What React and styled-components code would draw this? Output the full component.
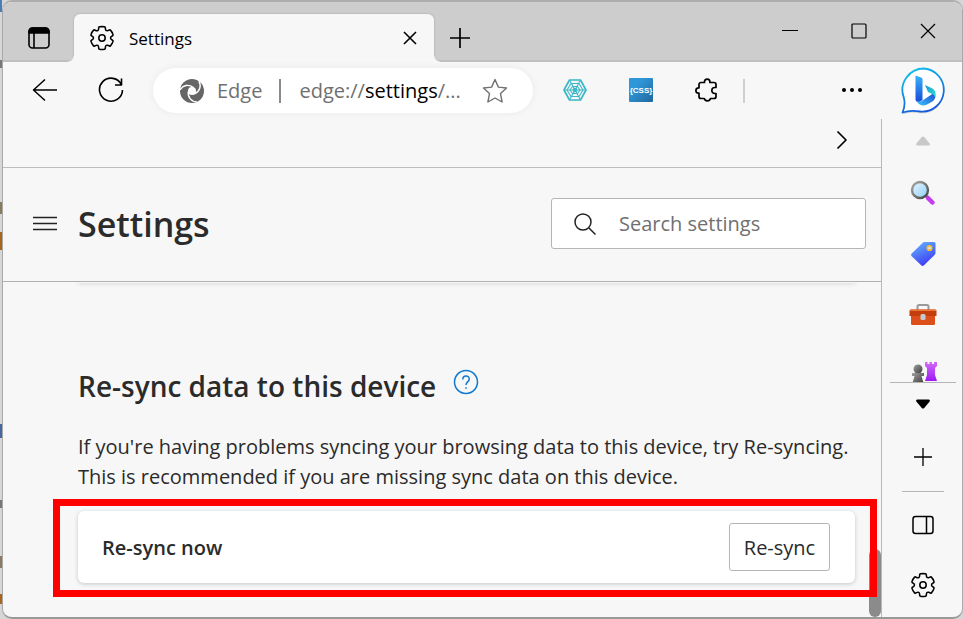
import React, { useState } from 'react'
import styled, { createGlobalStyle } from 'styled-components'

const gearOutline =
    'M12 2.25C12.75 2.26 13.48 2.34 14.19 2.5C14.51 2.57 14.74 2.83 14.78 3.15L14.95 4.68C15.02 5.38 15.62 5.91 16.32 5.91C16.51 5.91 16.7 5.87 16.87 5.79L18.27 5.18C18.57 5.05 18.91 5.12 19.12 5.35C20.14 6.43 20.89 7.73 21.33 9.15C21.42 9.45 21.31 9.78 21.06 9.97L19.81 10.89C19.46 11.15 19.25 11.56 19.25 12C19.25 12.44 19.46 12.85 19.82 13.11L21.06 14.03C21.32 14.22 21.42 14.55 21.33 14.85C20.89 16.27 20.14 17.56 19.13 18.65C18.91 18.88 18.57 18.95 18.28 18.82L16.87 18.2C16.47 18.03 16.01 18.05 15.63 18.27C15.25 18.49 14.99 18.88 14.95 19.32L14.78 20.84C14.74 21.16 14.51 21.42 14.2 21.49C12.76 21.84 11.25 21.84 9.8 21.49C9.49 21.42 9.26 21.16 9.23 20.84L9.06 19.32C9.01 18.88 8.75 18.5 8.37 18.28C7.99 18.06 7.53 18.03 7.13 18.21L5.73 18.83C5.43 18.95 5.09 18.88 4.88 18.65C3.86 17.57 3.11 16.27 2.67 14.85C2.58 14.55 2.69 14.22 2.94 14.03L4.19 13.11C4.54 12.85 4.75 12.44 4.75 12C4.75 11.56 4.54 11.15 4.19 10.89L2.95 9.97C2.69 9.78 2.58 9.45 2.67 9.15C3.11 7.73 3.87 6.44 4.88 5.35C5.1 5.12 5.44 5.05 5.73 5.18L7.13 5.8C7.53 5.97 7.99 5.95 8.38 5.72C8.76 5.5 9.01 5.11 9.06 4.68L9.23 3.15C9.26 2.83 9.5 2.57 9.81 2.5C10.53 2.34 11.26 2.26 12 2.25Z'

const GearIcon = () => (
    <Icon $size={26} viewBox="1 1 22 22" $weight={1.3}>
        <path d={gearOutline} />
        <circle cx="12" cy="12" r="2.7" />
    </Icon>
)

const WorkspaceIcon = () => (
    <Icon $size={24} $weight={1.6}>
        <rect x="2" y="2" width="20" height="20" rx="3.5" />
        <path d="M2 7V5.5A3.5 3.5 0 0 1 5.5 2h13A3.5 3.5 0 0 1 22 5.500V7z" fill="#000" />
        <path d="M7 7v15" />
    </Icon>
)

const SwirlIcon = () => (
    <Icon $size={24} $weight={0}>
        <circle cx="12" cy="12" r="12" fill="#666" />
        <g fill="none" stroke="#fff" strokeWidth="1.400">
            <path d="M13.500 8.500C8.500 5 3 6 0 11" />
            <path d="M13.500 8.500C8.500 5 3 6 0 11" transform="rotate(120 12 12)" />
            <path d="M13.500 8.500C8.500 5 3 6 0 11" transform="rotate(240 12 12)" />
        </g>
        <circle cx="12" cy="12" r="4" fill="#fff" />
    </Icon>
)

const WebIcon = () => (
    <Icon $size={24} $color="#3bb8c8" $weight={1.1}>
        <path d="M6.500 2h11L23 12l-5.500 10h-11L1 12z" strokeWidth="1.700" />
        <path d="M8 5.500h8l4 6.500-4 6.500H8L4 12zM9.500 8.500h5L17 12l-2.500 3.500h-5L7 12z" />
        <path d="M6.500 2l11 20M17.500 2l-11 20M1 12h22" />
        <circle cx="12" cy="12" r="1.800" fill="#3bb8c8" />
    </Icon>
)

const CssIcon = () => (
    <Icon $size={24} $weight={0}>
        <defs>
            <linearGradient id="css" x1="0" y1="0" x2="1" y2="1">
                <stop offset="0.300" stopColor="#2f97d8" />
                <stop offset="1" stopColor="#20679b" />
            </linearGradient>
        </defs>
        <rect width="24" height="24" rx="1" fill="url(#css)" />
        <text x="12" y="15" textAnchor="middle" fill="#fff" fontFamily="Liberation Sans, sans-serif" fontWeight="700" fontSize="8">{'{CSS}'}</text>
    </Icon>
)

const PuzzleIcon = () => (
    <Icon $size={24} $weight={1.7}>
        <path d="M6 4.500h3.500v-.7a2.700 2.700 0 0 1 5.400 0v.7H19a2 2 0 0 1 2 2v3h-1.200a3 3 0 0 0 0 6H21v3a2 2 0 0 1-2 2h-3.500a3.200 3.200 0 0 1-6.200 0H6a2 2 0 0 1-2-2v-3.300h-.4a2.700 2.700 0 0 1 0-5.400H4V6.500a2 2 0 0 1 2-2z" />
    </Icon>
)

const BingIcon = () => (
    <Icon $size={50} viewBox="0 0 50 50" $weight={0}>
        <defs>
            <linearGradient id="ring" x1="0.200" y1="0" x2="0.600" y2="1">
                <stop offset="0" stopColor="#12c0ec" />
                <stop offset="1" stopColor="#1455d8" />
            </linearGradient>
            <linearGradient id="stem" x1="0" y1="0" x2="0" y2="1">
                <stop offset="0" stopColor="#35b4fb" />
                <stop offset="1" stopColor="#1848d8" />
            </linearGradient>
            <linearGradient id="bowl" x1="0" y1="1" x2="1" y2="0">
                <stop offset="0" stopColor="#39c5fa" />
                <stop offset="1" stopColor="#1b48d4" />
            </linearGradient>
            <linearGradient id="leaf" x1="0" y1="0" x2="1" y2="1">
                <stop offset="0" stopColor="#169be0" />
                <stop offset="1" stopColor="#32dfc9" />
            </linearGradient>
        </defs>
        <path d="M25 3.500a21.500 21.500 0 1 1-3.500 43C15 45.500 9 45.500 3.500 47.500 6 42 6 37 4.800 32.500A21.500 21.500 0 0 1 25 3.500z" transform="translate(0 2)" fill="#000" opacity="0.120" />
        <path d="M25 3.500a21.500 21.500 0 1 1-3.500 43C15 45.500 9 45.500 3.500 47.500 6 42 6 37 4.800 32.500A21.500 21.500 0 0 1 25 3.500z" fill="#fff" stroke="url(#ring)" strokeWidth="1.800" />
        <path d="M16.500 10.500l5.500 2c1 .4 1.500 1 1.500 2.200V35l-4 2.500c-2-.5-3-1.800-3-3.500z" fill="url(#stem)" />
        <path d="M18 36l4 .5 13.500-9c2 4 .5 7.500-2.500 9.300l-5 2.800c-4 2-9 .4-10-3.600z" fill="url(#bowl)" />
        <path d="M26 20l7 3.300c3 1.500 4.500 5 3 9-.6-2-1.800-2.700-3.500-3.500L29 27z" fill="url(#leaf)" />
    </Icon>
)

const LensIcon = () => (
    <Icon $size={26} viewBox="0 0 26 26" $weight={0}>
        <defs>
            <linearGradient id="glass" x1="0" y1="0" x2="1" y2="1">
                <stop offset="0" stopColor="#e6f6ff" />
                <stop offset="1" stopColor="#8fd0f8" />
            </linearGradient>
            <linearGradient id="rim" x1="0" y1="0" x2="1" y2="1">
                <stop offset="0" stopColor="#aaa" />
                <stop offset="1" stopColor="#444" />
            </linearGradient>
        </defs>
        <path d="M15 15l3 3" stroke="#555" strokeWidth="3" />
        <path d="M18 18l4.500 4.500" stroke="#c63df0" strokeWidth="4.500" strokeLinecap="round" />
        <circle cx="10" cy="10" r="8" fill="url(#glass)" stroke="url(#rim)" strokeWidth="2.400" />
    </Icon>
)

const TagIcon = () => (
    <Icon $size={26} viewBox="0 0 26 26" $weight={0}>
        <defs>
            <linearGradient id="tag" x1="0.200" y1="0" x2="0.700" y2="1">
                <stop offset="0" stopColor="#62b3fa" />
                <stop offset="1" stopColor="#3c35f5" />
            </linearGradient>
        </defs>
        <path d="M14.500 1H24a1.500 1.500 0 0 1 1.500 1.500V12a3 3 0 0 1-1 2L14 24.300a2 2 0 0 1-2.800 0L1.700 15.200a2 2 0 0 1 0-2.800L12.500 2a3 3 0 0 1 2-1z" fill="url(#tag)" />
        <circle cx="19.500" cy="7" r="2.300" fill="#d5dce8" stroke="#f8bd1a" strokeWidth="1.600" />
    </Icon>
)

const ToolboxIcon = () => (
    <Icon $size={28} viewBox="0 0 28 28" $weight={0}>
        <path d="M8.500 9V5.500A1.500 1.500 0 0 1 10 4h8a1.500 1.500 0 0 1 1.500 1.500V9" fill="none" stroke="#999" strokeWidth="2" />
        <path d="M2 13h24v9.500a1.500 1.500 0 0 1-1.500 1.500h-21A1.500 1.500 0 0 1 2 22.500z" fill="#dc4f1b" />
        <path d="M2 8.500h24a1.500 1.500 0 0 1 1.500 1.500V15h-27v-5A1.500 1.500 0 0 1 2 8.500z" fill="#c43d0c" />
        <path d="M2 8.500h24a1.500 1.500 0 0 1 1.400 1.500H.6A1.500 1.500 0 0 1 2 8.500z" fill="#ed7639" />
        <rect x="11.500" y="13" width="5" height="6" rx="1.500" fill="#c3cbd1" />
    </Icon>
)

const ChessIcon = () => (
    <Icon $size={28} viewBox="0 5 28 28" $weight={0}>
        <defs>
            <linearGradient id="rook" x1="0" y1="0" x2="0" y2="1">
                <stop offset="0" stopColor="#d16cf5" />
                <stop offset="1" stopColor="#9d19f5" />
            </linearGradient>
            <linearGradient id="pawn" x1="0" y1="0" x2="1" y2="1">
                <stop offset="0" stopColor="#a0a0a0" />
                <stop offset="1" stopColor="#3d3d3d" />
            </linearGradient>
        </defs>
        <path d="M16 5h2.500v2h2V5h2.500v2h2V5H28v4l-2 2v7l2 6H16l2-6v-7l-2-2z" fill="url(#rook)" />
        <circle cx="9" cy="12" r="4.500" fill="url(#pawn)" />
        <path d="M3 16h12v3h-2.500l2 7h-11l2-7H3z" fill="url(#pawn)" />
    </Icon>
)

const extensions = [
    { name: 'Web inspector', icon: <WebIcon /> },
    { name: 'CSS viewer', icon: <CssIcon /> },
    { name: 'Extensions', icon: <PuzzleIcon /> },
]

const sidebarApps = [
    { name: 'Search', icon: <LensIcon /> },
    { name: 'Shopping', icon: <TagIcon /> },
    { name: 'Tools', icon: <ToolboxIcon /> },
    { name: 'Games', icon: <ChessIcon /> },
]

const App = () => {
    const [search, setSearch] = useState('')

    return (
        <>
            <GlobalStyle />
            <Desktop>
                <Window>
                    <TitleBar>
                        <IconButton $width={71} aria-label="Workspaces"><WorkspaceIcon /></IconButton>
                        <Tab>
                            <GearIcon />
                            <span>Settings</span>
                            <TabClose aria-label="Close tab">
                                <Icon $size={14} viewBox="0 0 14 14" $weight={1.6}><path d="M1 1l12 12M13 1L1 13" /></Icon>
                            </TabClose>
                        </Tab>
                        <IconButton $width={52} aria-label="New tab">
                            <Icon $size={22} viewBox="0 0 22 22" $weight={1.7}><path d="M11 1v20M1 11h20" /></Icon>
                        </IconButton>
                        <WindowControls>
                            <IconButton $width={69} aria-label="Minimize">
                                <Icon $size={16} viewBox="0 0 16 16" $weight={1}><path d="M0 7.500h16" /></Icon>
                            </IconButton>
                            <IconButton $width={69} aria-label="Maximize">
                                <Icon $size={16} viewBox="0 0 16 16" $weight={1.2}><rect x="1" y="1" width="14" height="14" rx="1" /></Icon>
                            </IconButton>
                            <IconButton $width={69} aria-label="Close window">
                                <Icon $size={16} viewBox="0 0 16 16" $weight={1.2}><path d="M1 1l14 14M15 1L1 15" /></Icon>
                            </IconButton>
                        </WindowControls>
                    </TitleBar>

                    <Toolbar>
                        <IconButton $width={66} aria-label="Back">
                            <Icon $size={26} viewBox="0 0 26 26" $weight={1.5}><path d="M25 13H1.500M13 2.500L1.500 13 13 23.500" /></Icon>
                        </IconButton>
                        <IconButton $width={66} aria-label="Refresh">
                            <Icon $size={26} viewBox="0 0 26 26" $weight={1.6}>
                                <path d="M23.500 8A11.500 11.500 0 1 0 24.500 13M23.500 1.500V8H17" />
                            </Icon>
                        </IconButton>
                        <AddressBar>
                            <SwirlIcon />
                            <SiteName>Edge</SiteName>
                            <Url>edge://<b>settings</b>/...</Url>
                            <StarButton aria-label="Add to favorites">
                                <Icon $size={26} viewBox="0 0 26 26" $color="#707070" $weight={1.4}>
                                    <path d="M13 1.500l3.400 7.600 8.100.9-6 5.600 1.600 8.400L13 20l-7.100 4 1.600-8.400-6-5.600 8.100-.9z" />
                                </Icon>
                            </StarButton>
                        </AddressBar>
                        {extensions.map((item) => (
                            <IconButton key={item.name} $width={66} aria-label={item.name}>{item.icon}</IconButton>
                        ))}
                        <ToolbarDivider />
                        <IconButton $width={66} aria-label="More">
                            <Icon $size={24} $weight={0}>
                                <g fill="#000"><circle cx="4" cy="12" r="2" /><circle cx="12" cy="12" r="2" /><circle cx="20" cy="12" r="2" /></g>
                            </Icon>
                        </IconButton>
                        <IconButton $width={77} aria-label="Discover"><BingIcon /></IconButton>
                    </Toolbar>

                    <Body>
                        <Page>
                            <FavoritesBar>
                                <IconButton $width={48} aria-label="More favorites">
                                    <Icon $size={20} viewBox="0 0 20 20" $weight={1.7}><path d="M5.500 1.500L14 10l-8.500 8.500" /></Icon>
                                </IconButton>
                            </FavoritesBar>
                            <PageHeader>
                                <MenuButton aria-label="Settings menu">
                                    <Icon $size={24} $color="#222" $weight={1.4}><path d="M0 5.500h24M0 11.500h24M0 17.500h24" /></Icon>
                                </MenuButton>
                                <h1>Settings</h1>
                                <SearchBox>
                                    <Icon $size={24} $color="#222" $weight={1.5}>
                                        <circle cx="10" cy="10" r="8" /><path d="M16 16l6.500 6.500" />
                                    </Icon>
                                    <input
                                        type="text"
                                        aria-label="Search settings"
                                        placeholder="Search settings"
                                        value={search}
                                        onChange={(e) => setSearch(e.target.value)}
                                    />
                                </SearchBox>
                            </PageHeader>
                            <ScrollArea>
                                <Content>
                                    <CardEdge />
                                    <Heading>
                                        <h2>Re-sync data to this device</h2>
                                        <HelpButton aria-label="Help">
                                            <Icon $size={26} viewBox="0 0 26 26" $color="#0f78d0" $weight={1.5}>
                                                <circle cx="13" cy="13" r="11.500" />
                                                <path d="M9.800 10.500c0-4.500 6.500-4.500 6.500-.5 0 2.800-3.300 3-3.300 6M13 18.300v1.500" />
                                            </Icon>
                                        </HelpButton>
                                    </Heading>
                                    <Description>
                                        If you're having problems syncing your browsing data to this device, try Re-syncing. This is recommended if you are missing sync data on this device.
                                    </Description>
                                    <Card>
                                        <strong>Re-sync now</strong>
                                        <SyncButton>Re-sync</SyncButton>
                                        <Highlight />
                                    </Card>
                                </Content>
                                <ScrollTrack><ScrollThumb /></ScrollTrack>
                            </ScrollArea>
                        </Page>

                        <Sidebar>
                            <SideButton $height={43} aria-label="Scroll up">
                                <Icon $size={16} viewBox="0 0 16 16" $weight={0}><path d="M8 3.500q.7 0 1.200.6l5.500 6.500q.8 1.900-1 1.900H2.300q-1.800 0-1-1.900l5.500-6.500Q7.300 3.500 8 3.500z" fill="#c8c8c8" /></Icon>
                            </SideButton>
                            <SideApps>
                                {sidebarApps.map((item) => (
                                    <SideButton key={item.name} $height={61} aria-label={item.name}>{item.icon}</SideButton>
                                ))}
                            </SideApps>
                            <SideLine $width={66} />
                            <SideButton $height={42} aria-label="Scroll down">
                                <Icon $size={16} viewBox="0 0 16 16" $weight={0}><path d="M8 12.500q-.7 0-1.200-.6L1.300 5.400q-.8-1.900 1-1.900h11.400q1.800 0 1 1.900l-5.500 6.500q-.5.6-1.200.6z" fill="#000" /></Icon>
                            </SideButton>
                            <SideButton $height={64} aria-label="Customize sidebar">
                                <Icon $size={18} viewBox="0 0 18 18" $weight={1.3}><path d="M9 0v18M0 9h18" /></Icon>
                            </SideButton>
                            <SideLine $width={42} $gap={2} />
                            <SideButton $height={61} aria-label="Toggle sidebar">
                                <Icon $size={22} viewBox="0 0 22 22" $weight={1.5}>
                                    <rect x="1" y="2.500" width="20" height="17" rx="2.500" /><path d="M14.500 2.500v17" />
                                </Icon>
                            </SideButton>
                            <SideButton $height={60} aria-label="Sidebar settings"><GearIcon /></SideButton>
                        </Sidebar>
                    </Body>
                </Window>
            </Desktop>
        </>
    )
}

export default App

const GlobalStyle = createGlobalStyle`
    * {
        box-sizing: border-box;
    }
    body {
        margin: 0;
        font-family: "Open Sans", "Noto Sans", sans-serif;
        font-size: 20px;
        color: #2b2b2b;
    }
    button {
        font: inherit;
        color: inherit;
        background: none;
        border: none;
        padding: 0;
        cursor: pointer;
    }
    h1, h2, p {
        margin: 0;
    }
`

const Icon = styled.svg.attrs((props) => ({ viewBox: props.viewBox || '0 0 24 24' }))`
    width: ${(props) => props.$size}px;
    height: ${(props) => props.$size}px;
    flex: none;
    display: block;
    fill: none;
    stroke: ${(props) => (props.$weight ? props.$color || '#000' : 'none')};
    stroke-width: ${(props) => props.$weight};
    stroke-linejoin: round;
`

/* the gradient is the sliver of the editor that shows left of the window */
const Desktop = styled.div`
    height: 100vh;
    padding-left: 2px;
    background:
        linear-gradient(
            #4a7fb5 0 12px, #d6d6d6 12px 60px, #777 60px 68px, #d6d6d6 68px 202px,
            #8a7a60 202px 214px, #d6d6d6 214px 232px, #a8651c 232px 250px, #d6d6d6 250px 424px,
            #4668a0 424px 438px, #d6d6d6 438px 500px, #777 500px 508px, #d6d6d6 508px 556px,
            #8a7a60 556px 568px, #d6d6d6 568px 594px, #a8651c 594px 604px, #d6d6d6 604px
        ) left top / 2px 100% no-repeat,
        #d6d6d6;
`

const Window = styled.div`
    height: 100%;
    display: flex;
    flex-direction: column;
    overflow: hidden;
    background: #f7f7f7;
    border: 1px solid #a9a9a9;
    border-top: 2px solid #adadad;
    border-bottom: 2px solid #999;
    border-radius: 10px;
`

const IconButton = styled.button`
    width: ${(props) => props.$width}px;
    flex: none;
    display: flex;
    align-items: center;
    justify-content: center;
`

const TitleBar = styled.div`
    height: 60px;
    flex: none;
    display: flex;
    padding-top: 12px;
    background: #cdcdcd;
    box-shadow: inset 0 -2px 0 #bfbfbf;
`

const Tab = styled.div`
    position: relative;
    flex: 0 1 360px;
    display: flex;
    align-items: center;
    padding: 0 15px;
    background: #f7f7f7;
    border-radius: 6px 6px 0 0;
    box-shadow: 0 0 2px #999;
    clip-path: inset(-2px -6px 0 -6px);
    font-size: 17px;
    color: #000;

    span {
        flex: 1;
        margin-left: 14px;
    }

    &::before,
    &::after {
        content: '';
        position: absolute;
        bottom: 0;
        width: 6px;
        height: 6px;
    }
    &::before {
        right: 100%;
        background: radial-gradient(circle at 0 0, transparent 5px, #f7f7f7 6px);
    }
    &::after {
        left: 100%;
        background: radial-gradient(circle at 100% 0, transparent 5px, #f7f7f7 6px);
    }
`

const TabClose = styled.button`
    padding: 2px;
`

const WindowControls = styled.div`
    margin: -12px 0 2px auto;
    display: flex;
`

const Toolbar = styled.div`
    height: 57px;
    flex: none;
    display: flex;
    padding: 0 0 1px 9px;
`

const AddressBar = styled.div`
    flex: 1;
    min-width: 0;
    height: 45px;
    margin: 6px 9px;
    padding: 0 25px 0 27px;
    display: flex;
    align-items: center;
    background: #fff;
    border-radius: 23px;
    box-shadow: 0 0 8px #0000000F;
    color: #707070;
`

const SiteName = styled.span`
    margin-left: 13px;
    padding-right: 17px;
    border-right: 2px solid #8a8a8a;
    line-height: 24px;
`

const Url = styled.span`
    flex: 1;
    margin-left: 18px;
    white-space: nowrap;

    b {
        font-weight: 400;
        color: #000;
    }
`

const StarButton = styled.button`
    flex: none;
`

const ToolbarDivider = styled.div`
    width: 2px;
    height: 24px;
    margin: 17px 74px 0 3px;
    background: #cfcfcf;
`

const Body = styled.div`
    flex: 1;
    min-height: 0;
    display: flex;
`

const Page = styled.main`
    flex: 1;
    min-width: 0;
    display: flex;
    flex-direction: column;
`

const FavoritesBar = styled.div`
    height: 49px;
    flex: none;
    display: flex;
    justify-content: flex-end;
    padding: 0 15px 6px;
    border-bottom: 1px solid #bdbdbd;
`

const PageHeader = styled.header`
    flex: none;
    display: flex;
    align-items: center;
    padding: 30px 15px 32px 30px;
    border-bottom: 1px solid #b0b0b0;

    h1 {
        flex: 1;
        margin-left: 21px;
        font-size: 34px;
        line-height: 48px;
        font-weight: 600;
    }
`

const MenuButton = styled.button`
    flex: none;
`

const SearchBox = styled.label`
    flex: 0 1 315px;
    min-width: 0;
    height: 51px;
    display: flex;
    align-items: center;
    gap: 22px;
    padding: 0 21px;
    background: #fff;
    border: 1px solid #b5b5b5;
    border-radius: 3px;

    input {
        flex: 1;
        min-width: 0;
        padding: 0;
        border: none;
        outline: none;
        background: none;
        font: inherit;
        color: #2b2b2b;
    }
    input::placeholder {
        color: #707070;
        opacity: 1;
    }
`

const ScrollArea = styled.div`
    flex: 1;
    min-height: 0;
    display: flex;
    overflow: hidden;
`

const Content = styled.div`
    flex: 1;
    padding: 0 14px 0 75px;
`

/* bottom edge of the card scrolled out of view */
const CardEdge = styled.div`
    height: 1px;
    border-radius: 6px;
    box-shadow: 0 0 4px #00000066;
`

const Heading = styled.div`
    display: flex;
    margin-top: 83px;

    h2 {
        font-size: 28px;
        line-height: 40px;
        font-weight: 600;
    }
`

const HelpButton = styled.button`
    height: 32px;
    margin-left: 17px;
`

const Description = styled.p`
    margin-top: 26px;
    line-height: 30px;
`

const Card = styled.section`
    position: relative;
    height: 72px;
    margin-top: 19px;
    padding: 0 25px 0 24px;
    display: flex;
    align-items: center;
    justify-content: space-between;
    background: #fff;
    border-radius: 6px;
    box-shadow: 0 1px 4px #00000033;

    strong {
        font-weight: 600;
    }
`

const SyncButton = styled.button`
    width: 101px;
    height: 48px;
    border: 1px solid #b5b5b5;
    border-radius: 3px;
`

const Highlight = styled.div`
    position: absolute;
    inset: -12px -22px -14px -25px;
    border: 7px solid #ff0000;
    pointer-events: none;
`

const ScrollTrack = styled.div`
    width: 12px;
    display: flex;
    flex-direction: column;
    justify-content: flex-end;
`

const ScrollThumb = styled.div`
    height: 68px;
    border-radius: 6px;
    background: #8b8b8b;
`

const Sidebar = styled.aside`
    width: 81px;
    flex: none;
    display: flex;
    flex-direction: column;
    align-items: center;
    padding: 0 0 2px 1px;
    border-left: 1px solid #b8b8b8;
`

const SideApps = styled.div`
    flex: 1;
    min-height: 0;
    overflow: hidden;
`

const SideButton = styled.button`
    width: 66px;
    height: ${(props) => props.$height}px;
    flex: none;
    display: flex;
    align-items: center;
    justify-content: center;
`

const SideLine = styled.div`
    width: ${(props) => props.$width}px;
    height: 1px;
    flex: none;
    margin: ${(props) => props.$gap || 0}px 0;
    background: #b5b5b5;
`
